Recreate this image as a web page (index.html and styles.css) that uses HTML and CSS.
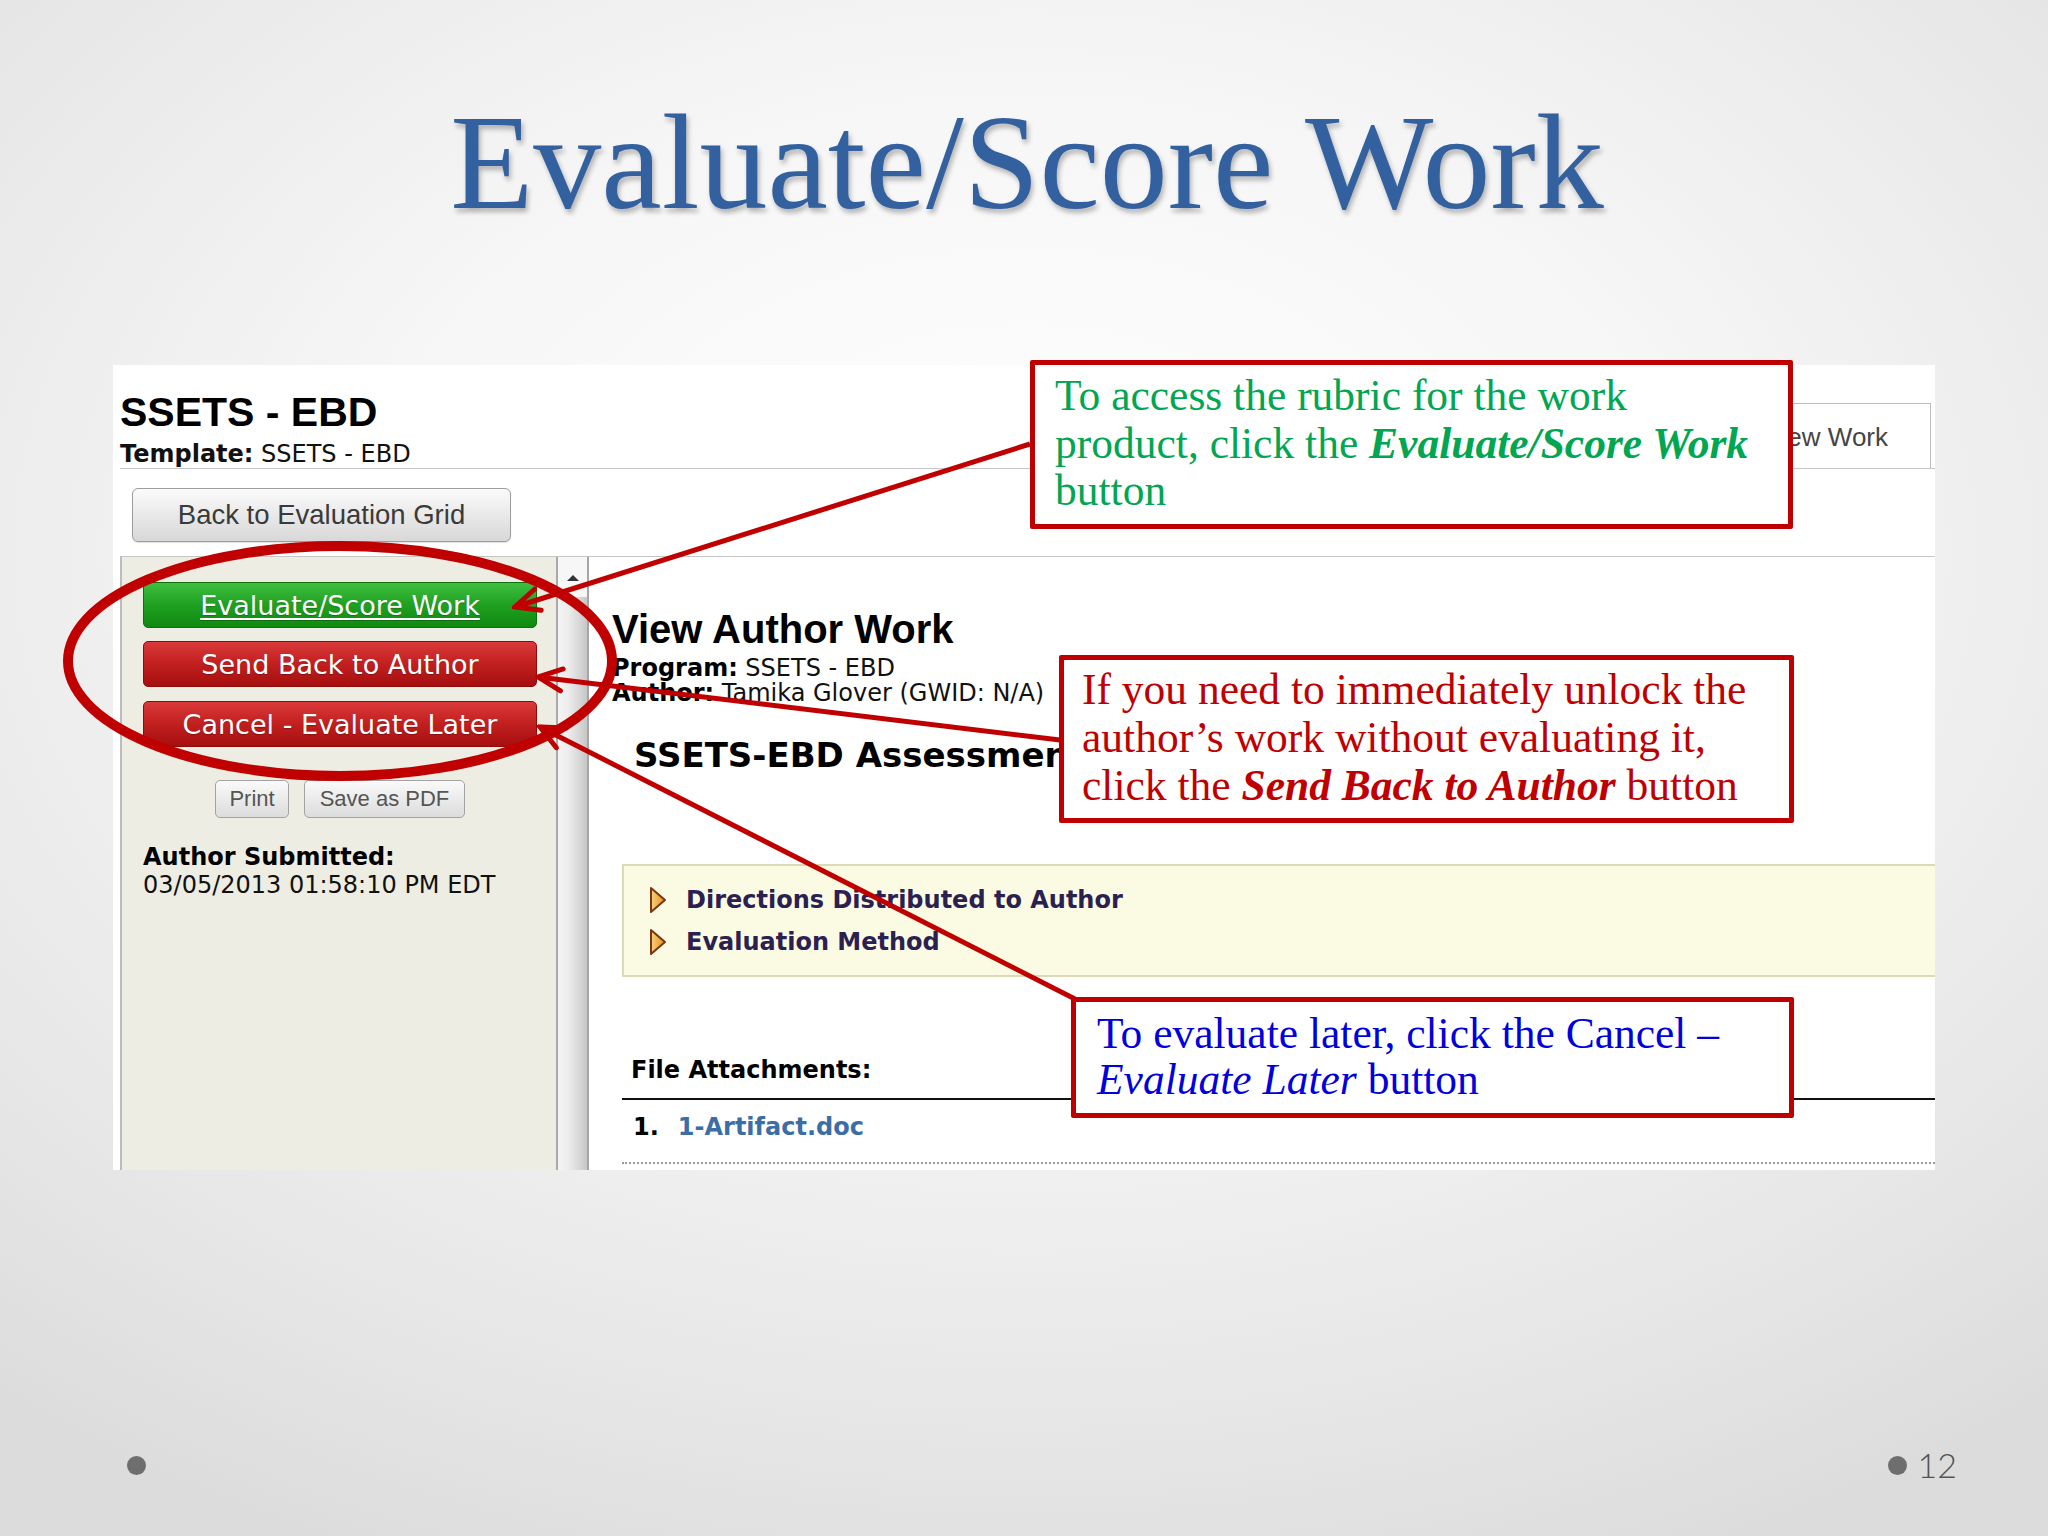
FILE: index.html
```html
<!DOCTYPE html>
<html lang="en">
<head>
<meta charset="utf-8">
<title>Evaluate/Score Work</title>
<link rel="stylesheet" href="styles.css">
</head>
<body>
<div class="slide">
  <header class="title-area">
    <h1 class="title">Evaluate/Score Work</h1>
  </header>

  <div class="shot">
    <div class="shot-head">
      <div class="prog">
        <div class="prog-name">SSETS - EBD</div>
        <div class="prog-template"><b>Template:</b> SSETS - EBD</div>
      </div>
      <div class="tab">View Work</div>
    </div>
    <div class="toolbar">
      <div class="btn-grey">Back to Evaluation Grid</div>
    </div>
    <div class="panel">
      <aside class="sidebar">
        <div class="act act-green"><span class="u">Evaluate/Score Work</span></div>
        <div class="act act-red">Send Back to Author</div>
        <div class="act act-red">Cancel - Evaluate Later</div>
        <div class="small-row">
          <div class="sbtn sbtn-print">Print</div>
          <div class="sbtn sbtn-pdf">Save as PDF</div>
        </div>
        <div class="submitted">
          <div class="sub-label">Author Submitted:</div>
          <div>03/05/2013 01:58:10 PM EDT</div>
        </div>
      </aside>
      <div class="scroll">
        <span class="scroll-arrow"></span>
        <div class="scroll-thumb"></div>
      </div>
      <main class="main">
        <h2 class="view-title">View Author Work</h2>
        <div class="meta"><b>Program:</b> SSETS - EBD</div>
        <div class="meta meta2"><b>Author:</b> Tamika Glover (GWID: N/A)</div>
        <div class="assess">SSETS-EBD Assessment</div>
        <div class="dirs">
          <div class="dir">
            <svg class="tri" width="18" height="28" viewBox="0 0 18 28"><defs><linearGradient id="tg" x1="0" y1="0" x2="1" y2="0"><stop offset="0" stop-color="#f7d27a"/><stop offset="1" stop-color="#e58f1e"/></linearGradient></defs><polygon points="2,2 16,14 2,26" fill="url(#tg)" stroke="#7a3512" stroke-width="2" stroke-linejoin="round"/></svg>
            <span>Directions Distributed to Author</span>
          </div>
          <div class="dir">
            <svg class="tri" width="18" height="28" viewBox="0 0 18 28"><polygon points="2,2 16,14 2,26" fill="url(#tg)" stroke="#7a3512" stroke-width="2" stroke-linejoin="round"/></svg>
            <span>Evaluation Method</span>
          </div>
        </div>
        <div class="files">
          <div class="files-head">File Attachments:</div>
          <div class="file-row"><span class="num">1.</span><span class="file-link">1-Artifact.doc</span></div>
        </div>
      </main>
    </div>
  </div>

  <footer class="footer">
    <span class="dot"></span>
    <span class="pagenum"><span class="dot"></span><span>12</span></span>
  </footer>

  <svg class="marks" width="2048" height="1536" viewBox="0 0 2048 1536">
    <defs>
      <marker id="ah" markerUnits="userSpaceOnUse" viewBox="0 0 32 32" markerWidth="32" markerHeight="32" refX="29" refY="16" orient="auto">
        <path d="M5 5 L29 16 L5 27" fill="none" stroke="#c00000" stroke-width="5" stroke-linecap="round"/>
      </marker>
    </defs>
    <ellipse cx="340" cy="661" rx="272" ry="115" fill="none" stroke="#c00000" stroke-width="10"/>
    <line x1="1030" y1="444" x2="515" y2="607" stroke="#c00000" stroke-width="5" marker-end="url(#ah)"/>
    <line x1="1060" y1="740" x2="538" y2="677" stroke="#c00000" stroke-width="5" marker-end="url(#ah)"/>
    <line x1="1075" y1="999" x2="540" y2="727" stroke="#c00000" stroke-width="5" marker-end="url(#ah)"/>
  </svg>

  <div class="callout c1">To access the rubric for the work<br>product, click the <i>Evaluate/Score Work</i><br>button</div>
  <div class="callout c2">If you need to immediately unlock the<br>author’s work without evaluating it,<br>click the <i>Send Back to Author</i> button</div>
  <div class="callout c3">To evaluate later, click the Cancel –<br><i>Evaluate Later</i> button</div>
</div>
</body>
</html>
```

FILE: styles.css
```css
html, body {
  margin: 0;
  padding: 0;
}

body {
  width: 2048px;
  height: 1536px;
  overflow: hidden;
  background: radial-gradient(ellipse 78% 72% at 50% 36%, #ffffff 0%, #f6f6f6 42%, #e6e6e6 80%, #dcdcdc 100%);
  font-family: "Liberation Sans", Arial, sans-serif;
}

.slide {
  position: relative;
  width: 2048px;
  height: 1536px;
}

/* ---------- title ---------- */
.title-area {
  height: 365px;
  box-sizing: border-box;
  padding-top: 94px;
  padding-left: 6px;
  text-align: center;
}

.title {
  margin: 0;
  font-family: "Liberation Serif", "Times New Roman", serif;
  font-weight: 400;
  font-size: 136px;
  line-height: 136px;
  color: #33609f;
  text-shadow: 2px 4px 5px rgba(0, 0, 0, 0.28);
}

/* ---------- screenshot ---------- */
.shot {
  margin-left: 113px;
  width: 1822px;
  height: 805px;
  background: #ffffff;
  display: flex;
  flex-direction: column;
}

.shot-head {
  margin-left: 7px;
  padding-top: 25px;
  display: flex;
  justify-content: space-between;
  align-items: flex-end;
  border-bottom: 1px solid #c6c6c6;
}

.prog-name {
  font-family: "Liberation Sans", Arial, sans-serif;
  font-weight: 700;
  font-size: 41px;
  line-height: 45px;
  color: #000;
}

.prog-template {
  margin-top: 5px;
  font-family: "DejaVu Sans", Verdana, sans-serif;
  font-size: 24px;
  line-height: 28px;
  color: #111;
}

.tab {
  margin-right: 4px;
  height: 65px;
  box-sizing: border-box;
  padding: 3px 42px 0 40px;
  border: 1px solid #bdbdbd;
  border-bottom: none;
  font-size: 26px;
  line-height: 61px;
  color: #444;
  background: #fff;
}

.toolbar {
  margin-left: 7px;
  padding: 19px 0 14px 12px;
  border-bottom: 1px solid #c6c6c6;
}

.btn-grey {
  width: 379px;
  height: 54px;
  box-sizing: border-box;
  border: 1px solid #9d9d9d;
  border-radius: 6px;
  background: linear-gradient(#fbfbfb, #e9e9e9 50%, #d8d8d8);
  box-shadow: 0 1px 1px rgba(0, 0, 0, 0.12);
  font-size: 27.5px;
  line-height: 52px;
  color: #3a3a3a;
  text-align: center;
}

.panel {
  margin-left: 7px;
  flex: 1;
  min-height: 0;
  display: flex;
}

/* ---------- sidebar ---------- */
.sidebar {
  width: 438px;
  box-sizing: border-box;
  border-left: 2px solid #bcbcbc;
  border-right: 2px solid #a9a9a9;
  background: #edede4;
  padding: 25px 19px 0 21px;
}

.act {
  height: 46px;
  box-sizing: border-box;
  border-radius: 5px;
  display: flex;
  align-items: center;
  justify-content: center;
  color: #fff;
  font-family: "DejaVu Sans", Verdana, sans-serif;
  font-size: 27px;
  margin-bottom: 13px;
  text-shadow: 0 1px 1px rgba(0, 0, 0, 0.25);
}

.act-green {
  background: linear-gradient(#3fbf3f, #20a020 50%, #0f8a0f);
  border: 1px solid #0d6f0d;
}

.act-red {
  background: linear-gradient(#da3a3a, #c21f1f 50%, #a60f0f);
  border: 1px solid #8e0b0b;
}

.act-red + .act-red {
  margin-top: 14px;
}

.u {
  text-decoration: underline;
  text-decoration-thickness: 2px;
  text-underline-offset: 3px;
}

.small-row {
  margin-top: 33px;
  display: flex;
  justify-content: center;
  gap: 15px;
}

.sbtn {
  height: 38px;
  box-sizing: border-box;
  border: 1px solid #a3a3a3;
  border-radius: 5px;
  background: linear-gradient(#fafafa, #dcdcdc);
  font-size: 22px;
  line-height: 36px;
  color: #555;
  text-align: center;
}

.sbtn-print {
  width: 74px;
}

.sbtn-pdf {
  width: 161px;
}

.submitted {
  margin-top: 25px;
  font-family: "DejaVu Sans", Verdana, sans-serif;
  font-size: 24px;
  line-height: 28px;
  color: #111;
  white-space: nowrap;
}

.sub-label {
  font-weight: 700;
  color: #000;
}

/* ---------- scrollbar ---------- */
.scroll {
  width: 31px;
  box-sizing: border-box;
  border-right: 2px solid #a5a5a5;
  background: #f7f7f7;
  display: flex;
  flex-direction: column;
  align-items: center;
}

.scroll-arrow {
  margin-top: 18px;
  width: 0;
  height: 0;
  border-left: 6px solid transparent;
  border-right: 6px solid transparent;
  border-bottom: 6px solid #333;
}

.scroll-thumb {
  margin-top: 16px;
  align-self: stretch;
  flex: 1;
  background: linear-gradient(to right, #f4f4f4 0%, #ededed 35%, #d6d6d6 75%, #c6c6c6 100%);
}

/* ---------- main ---------- */
.main {
  flex: 1;
  min-width: 0;
  overflow: hidden;
  padding: 49px 0 0 23px;
}

.view-title {
  margin: 0;
  font-family: "Liberation Sans", Arial, sans-serif;
  font-weight: 700;
  font-size: 40px;
  line-height: 46px;
  color: #000;
}

.meta {
  margin-top: 4px;
  font-family: "DejaVu Sans", Verdana, sans-serif;
  font-size: 24px;
  line-height: 25px;
  color: #111;
  white-space: nowrap;
}

.meta2 {
  margin-top: 0;
}

.meta b {
  color: #000;
}

.assess {
  margin: 30px 0 0 22px;
  font-family: "DejaVu Sans", Verdana, sans-serif;
  font-weight: 700;
  font-size: 34px;
  line-height: 38px;
  color: #000;
  white-space: nowrap;
}

.dirs {
  margin: 90px 0 0 10px;
  background: #fbfbe3;
  border: 2px solid #dadab6;
  border-right: none;
  padding: 13px 0 12px 25px;
}

.dir {
  height: 42px;
  display: flex;
  align-items: center;
  gap: 19px;
  font-family: "DejaVu Sans", Verdana, sans-serif;
  font-weight: 700;
  font-size: 24px;
  color: #2b2150;
}

.tri {
  display: block;
  flex: none;
}

.files {
  margin: 78px 0 0 10px;
}

.files-head {
  padding: 0 0 13px 9px;
  border-bottom: 2px solid #111;
  font-family: "DejaVu Sans", Verdana, sans-serif;
  font-weight: 700;
  font-size: 24px;
  line-height: 30px;
  color: #000;
}

.file-row {
  margin-top: 12px;
  padding: 0 0 20px 11px;
  border-bottom: 2px dotted #9a9a9a;
  font-family: "DejaVu Sans", Verdana, sans-serif;
  font-weight: 700;
  font-size: 24px;
  line-height: 30px;
  color: #000;
}

.num {
  margin-right: 19px;
}

.file-link {
  color: #3c6ea6;
}

/* ---------- footer ---------- */
.footer {
  margin-top: 275px;
  height: 40px;
  display: flex;
  justify-content: space-between;
  align-items: center;
  padding: 0 91px 0 127px;
}

.dot {
  display: block;
  width: 19px;
  height: 19px;
  border-radius: 50%;
  background: #6e6e6e;
}

.pagenum {
  display: flex;
  align-items: center;
  gap: 11px;
  font-family: Lato, "Liberation Sans", sans-serif;
  font-weight: 300;
  font-size: 34px;
  line-height: 40px;
  color: #555;
}

/* ---------- overlays ---------- */
.marks {
  position: absolute;
  left: 0;
  top: 0;
  pointer-events: none;
}

.callout {
  position: absolute;
  box-sizing: border-box;
  border: 5px solid #c00000;
  border-radius: 2px;
  background: #fff;
  font-family: "Liberation Serif", "Times New Roman", serif;
  font-size: 43.5px;
  white-space: nowrap;
}

.callout i {
  font-weight: 700;
}

.c1 {
  left: 1030px;
  top: 360px;
  width: 763px;
  height: 169px;
  padding: 7px 0 0 20px;
  line-height: 47.5px;
  color: #00a651;
}

.c2 {
  left: 1059px;
  top: 655px;
  width: 735px;
  height: 168px;
  padding: 5px 0 0 18px;
  line-height: 48px;
  color: #c00000;
}

.c3 {
  left: 1071px;
  top: 997px;
  width: 723px;
  height: 121px;
  padding: 8px 0 0 21px;
  line-height: 46px;
  color: #0000dd;
}

.c3 i {
  font-weight: 400;
}
```
